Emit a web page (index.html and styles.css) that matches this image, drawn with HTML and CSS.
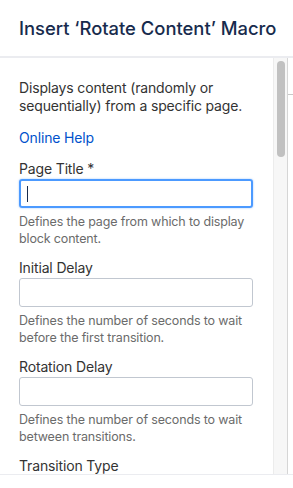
FILE: index.html
```html
<!DOCTYPE html>
<html lang="en">
<head>
    <meta charset="UTF-8">
    <meta name="viewport" content="width=device-width, initial-scale=1.0">
    <title>Insert Rotate Content Macro</title>
    <link rel="stylesheet" href="styles.css">
</head>
<body>
    <div class="dialog-header">
        <h2>Insert ‘Rotate Content’ Macro</h2>
    </div>

    <div class="dialog-body">
        <div class="macro-panel">
            <p class="macro-desc">Displays content (randomly or sequentially) from a specific page.</p>
            <a class="help-link" href="#">Online Help</a>

            <div class="field">
                <label>Page Title *</label>
                <div class="text-input focused"><span class="caret"></span></div>
                <div class="field-help">Defines the page from which to display block content.</div>
            </div>

            <div class="field">
                <label>Initial Delay</label>
                <div class="text-input"></div>
                <div class="field-help">Defines the number of seconds to wait before the first transition.</div>
            </div>

            <div class="field">
                <label>Rotation Delay</label>
                <div class="text-input"></div>
                <div class="field-help">Defines the number of seconds to wait between transitions.</div>
            </div>

            <div class="field">
                <label>Transition Type</label>
            </div>
        </div>

        <div class="scroll-track">
            <div class="scroll-thumb"></div>
        </div>

        <div class="preview-edge">
            <div class="preview-rule"></div>
        </div>
    </div>
</body>
</html>
```

FILE: styles.css
```css
body {
    margin: 0;
    font-family: Inter, "Noto Sans", sans-serif;
    background: #fff;
    color: #333;
}
.dialog-header {
    height: 56px;
    display: flex;
    align-items: center;
    padding-left: 19px;
    border-bottom: 2px solid #ebecf0;
}
.dialog-header h2 {
    margin: 0;
    font-size: 18.4px;
    font-weight: 500;
    color: #172b4d;
}
.dialog-body {
    display: flex;
    height: 416px;
    border-bottom: 1px solid #ebecf0;
}
.macro-panel {
    flex: 1;
    overflow: hidden;
    padding: 21px 20px 0 19px;
    letter-spacing: -0.15px;
}
.macro-desc {
    margin: 0;
    font-size: 14px;
    line-height: 18px;
}
.help-link {
    display: block;
    margin-top: 13px;
    font-size: 14px;
    line-height: 20px;
    color: #0052cc;
    text-decoration: none;
}
.field {
    margin-top: 11px;
}
.field label {
    display: block;
    font-size: 14px;
    line-height: 20px;
}
.text-input {
    height: 29px;
    border: 1px solid #c1c7d0;
    border-radius: 3px;
    box-sizing: border-box;
    display: flex;
    align-items: center;
    padding-left: 6px;
}
.text-input.focused {
    border: 2px solid #4c9aff;
    box-shadow: 0 0 2px rgba(76, 154, 255, 0.6);
}
.caret {
    width: 1px;
    height: 16px;
    background: #172b4d;
}
.field-help {
    margin-top: 5px;
    font-size: 12.5px;
    line-height: 17px;
    color: #6b6b6b;
}
.scroll-track {
    width: 15px;
    background: #f7f7f7;
    border-left: 1px solid #ececec;
    border-right: 1px solid #d6d6d6;
    padding-top: 3px;
    box-sizing: border-box;
    display: flex;
    justify-content: center;
}
.scroll-thumb {
    width: 8px;
    height: 96px;
    border-radius: 4px;
    background: #c1c1c1;
}
.preview-edge {
    width: 5px;
    padding-top: 36px;
}
.preview-rule {
    height: 1px;
    background: #c8c8c8;
}
```
